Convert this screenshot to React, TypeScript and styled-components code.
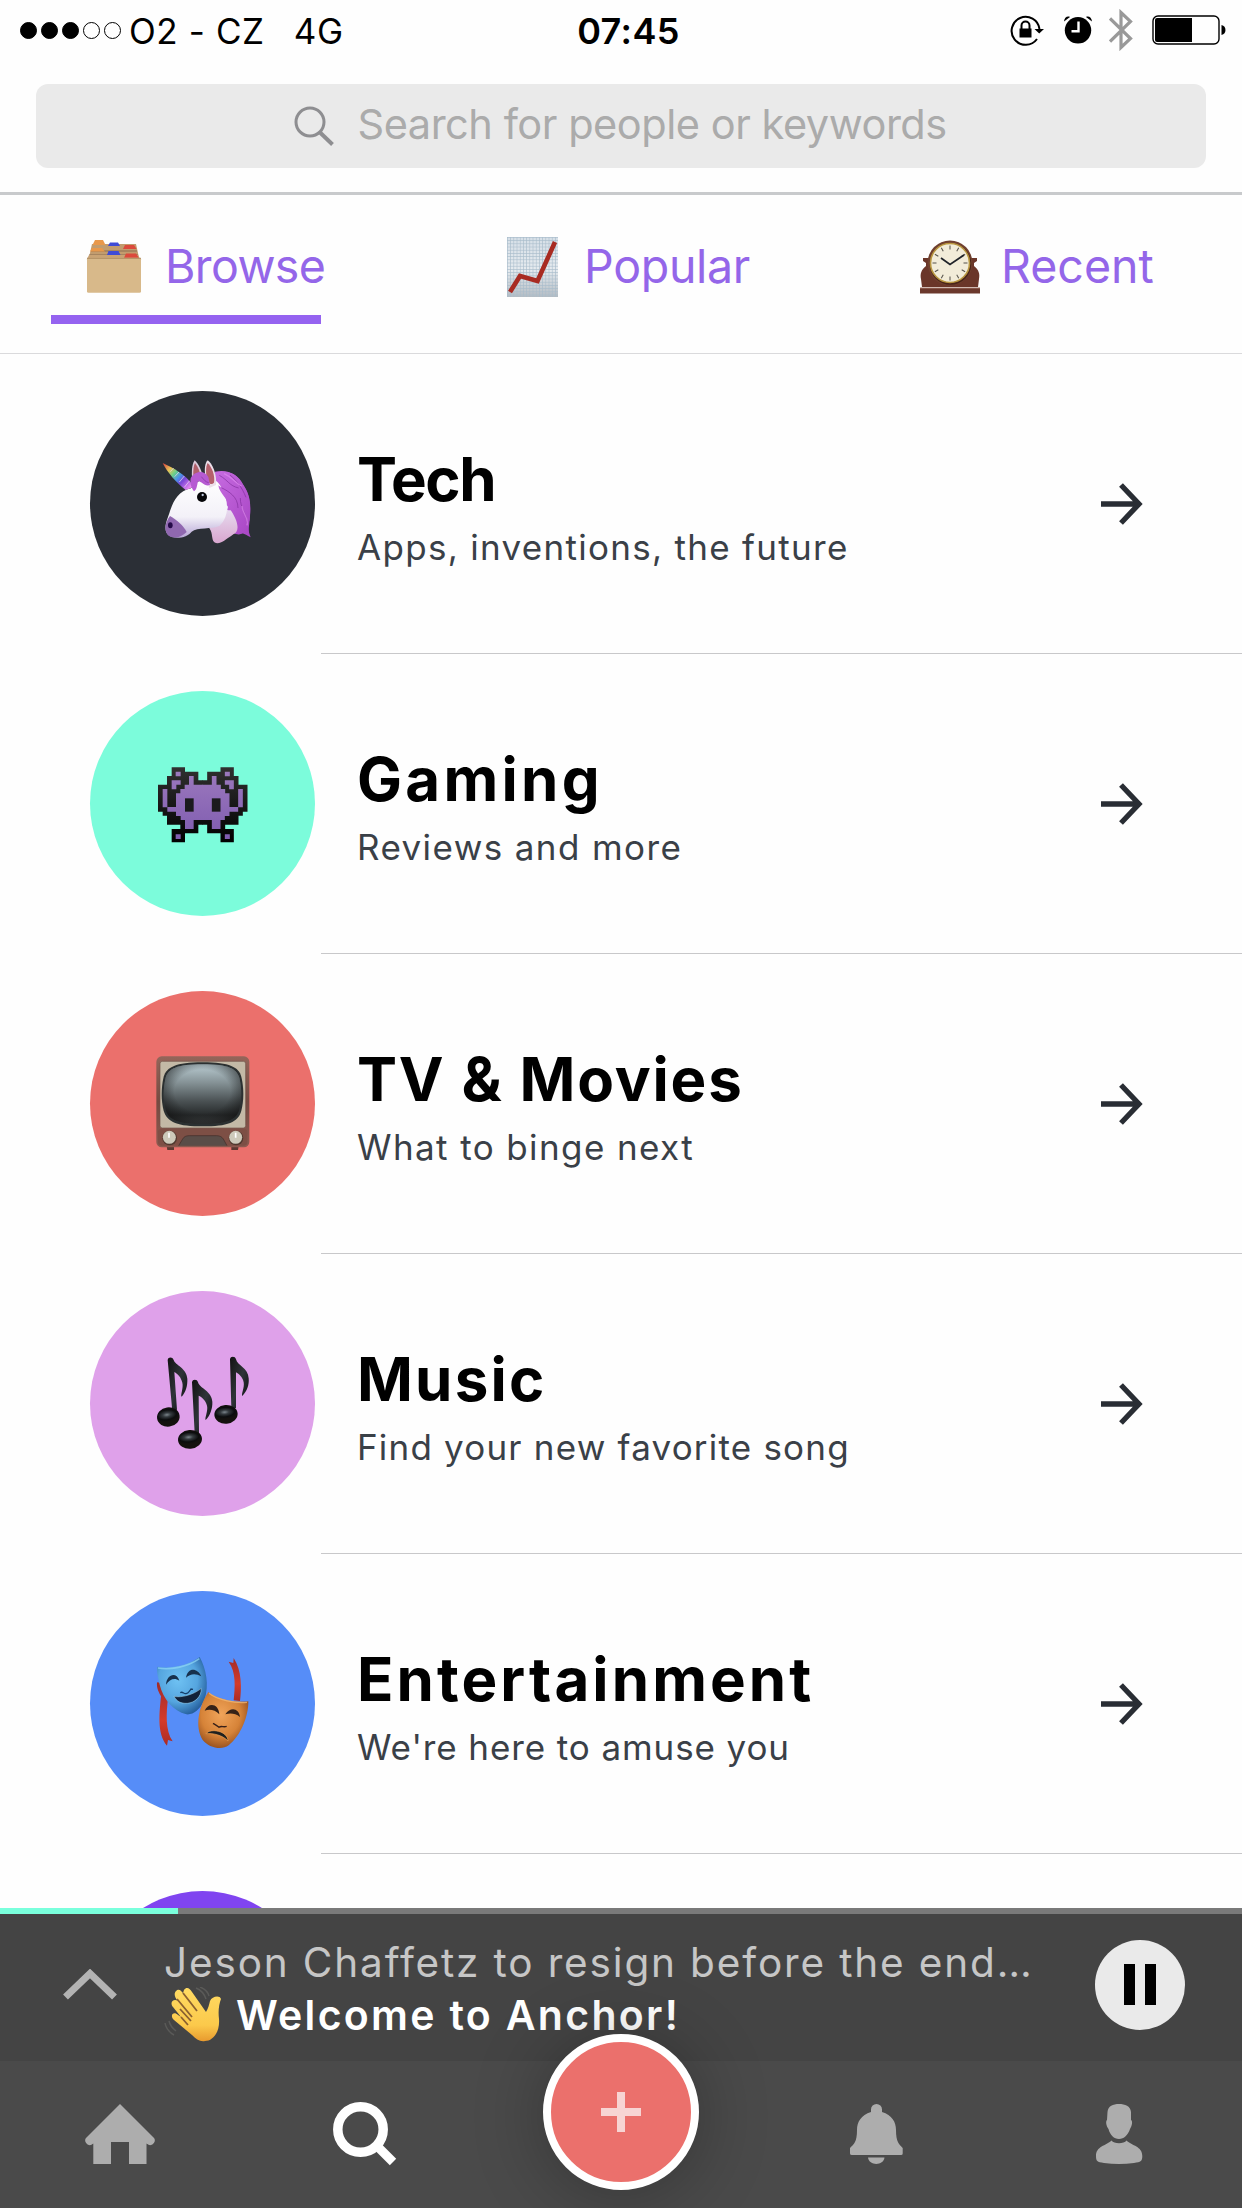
import React from "react";
import styled, { createGlobalStyle } from "styled-components";

const GlobalStyle = createGlobalStyle`
  *, *::before, *::after { box-sizing: border-box; }
  body { margin: 0; background: #fff; }
  svg { display: block; flex: none; }
`;

const Screen = styled.div`
  width: 1242px;
  height: 2208px;
  display: flex;
  flex-direction: column;
  overflow: hidden;
  background: #fefefe;
  font-family: Inter, "Liberation Sans", sans-serif;
`;

const StatusBar = styled.header`
  height: 60px;
  display: grid;
  grid-template-columns: 1fr auto 1fr;
  align-items: center;
  padding: 2px 16px 0 19px;
  font-size: 35px;
  line-height: 56px;
  color: #000;
`;

const Carrier = styled.div`
  display: flex;
  align-items: center;
  white-space: pre;
`;

const Signal = styled.div`
  display: flex;
  gap: 4px;
  margin: -1px 8px 0 1px;
`;

const Dot = styled.span<{ $on: boolean }>`
  width: 17px;
  height: 17px;
  border-radius: 50%;
  border: 1.5px solid #000;
  background: ${(p) => (p.$on ? "#000" : "transparent")};
`;

const CarrierText = styled.span<{ $track: number }>`
  letter-spacing: ${(p) => p.$track}px;
  margin-right: 29px;
`;

const Clock = styled.time`
  margin-left: 12px;
  font-size: 36px;
  font-weight: 600;
  letter-spacing: 0.4px;
`;

const StatusIcons = styled.div`
  display: flex;
  justify-content: flex-end;
  align-items: center;
  margin-top: -2px;
`;

const SearchArea = styled.div`
  height: 135px;
  padding: 24px 36px;
  border-bottom: 3px solid #c8cacc;
`;

const SearchBox = styled.div`
  height: 84px;
  border-radius: 12px;
  background: #eaeaea;
  display: flex;
  align-items: center;
  padding-left: 258px;
  gap: 22.5px;
`;

const Placeholder = styled.span`
  font-size: 41.5px;
  line-height: 80px;
  margin-top: -4px;
  letter-spacing: -0.46px;
  color: #ababab;
  white-space: nowrap;
`;

const Tabs = styled.nav`
  height: 159px;
  flex: none;
  display: flex;
  border-bottom: 1px solid #dadadc;
`;

const Tab = styled.div<{ $w: number; $pad: number; $gap: number }>`
  width: ${(p) => p.$w}px;
  padding-left: ${(p) => p.$pad}px;
  height: 142px;
  display: flex;
  align-items: center;
  gap: ${(p) => p.$gap}px;
`;

const TabGlyph = styled.span`
  margin-top: 2px;
`;

const TabLabel = styled.span<{ $track?: number }>`
  font-size: 46.5px;
  line-height: 60px;
  letter-spacing: ${(p) => p.$track ?? 0}px;
  color: #9466e9;
`;

const ActiveTab = styled.div`
  width: 420px;
  display: flex;
  flex-direction: column;
  padding-left: 51px;
`;

const Underline = styled.div`
  width: 270px;
  height: 9px;
  margin-top: -22px;
  background: #9563f0;
`;

const List = styled.main`
  flex: 1;
  min-height: 0;
  overflow: hidden;
`;

const Row = styled.section`
  height: 300px;
  display: flex;
  padding: 37px 0 0 90px;
`;

const Avatar = styled.div<{ $color: string }>`
  width: 225px;
  height: 225px;
  flex: none;
  border-radius: 50%;
  background: ${(p) => p.$color};
  display: flex;
  align-items: center;
  justify-content: center;
`;

const RowBody = styled.div`
  flex: 1;
  height: 263px;
  margin-left: 6px;
  padding: 0 98px 36px 36px;
  display: flex;
  align-items: center;
  justify-content: space-between;
  border-bottom: 1px solid #c8c8ca;
`;

const RowText = styled.div`
  padding-top: 6px;
`;

const Title = styled.h2<{ $track: number }>`
  margin: 0;
  font-size: 60px;
  font-weight: 700;
  line-height: 72px;
  letter-spacing: ${(p) => p.$track}px;
  color: #000;
  white-space: nowrap;
`;

const Subtitle = styled.p<{ $track: number }>`
  margin: 7px 0 0;
  font-size: 35px;
  line-height: 50px;
  letter-spacing: ${(p) => p.$track}px;
  color: #3a4047;
  white-space: nowrap;
`;

const Progress = styled.div`
  height: 6px;
  flex: none;
  background: #7a7a7a;
`;

const ProgressFill = styled.div`
  height: 6px;
  width: 178px;
  background: #7affdc;
`;

const Player = styled.div`
  height: 147px;
  flex: none;
  display: flex;
  align-items: flex-start;
  background: #444;
  padding: 0 57px 0 63px;
`;

const Expand = styled.div`
  padding-top: 55px;
  width: 101px;
`;

const Track = styled.div`
  flex: 1;
  padding-top: 24px;
`;

const Episode = styled.div`
  font-size: 40.5px;
  line-height: 50px;
  letter-spacing: 1.85px;
  color: #c6c6c6;
  white-space: nowrap;
`;

const Station = styled.div`
  display: flex;
  align-items: center;
  gap: 13px;
  font-size: 41px;
  font-weight: 600;
  line-height: 52px;
  height: 53px;
  letter-spacing: 2.3px;
  color: #fff;
  white-space: nowrap;
`;

const PauseButton = styled.div`
  width: 90px;
  height: 90px;
  margin-top: 26px;
  border-radius: 50%;
  background: #eaeaea;
  display: flex;
  align-items: center;
  justify-content: center;
  gap: 10px;
  padding: 0 0 1px 0;
`;

const PauseBar = styled.span`
  width: 11px;
  height: 41px;
  background: #000;
`;

const NavBar = styled.footer`
  position: relative;
  height: 147px;
  flex: none;
  display: flex;
  align-items: flex-start;
  background: #4a4a4a;
  padding: 43px 100px 0 85px;
`;

const NavItem = styled.div<{ $left?: number; $lift?: number }>`
  margin-left: ${(p) => p.$left ?? 0}px;
  margin-top: ${(p) => p.$lift ?? 0}px;
`;

const RecordButton = styled.div`
  position: absolute;
  left: 543px;
  top: -27px;
  width: 156px;
  height: 156px;
  border-radius: 50%;
  border: 8px solid #fff;
  background: #eb706c;
  box-shadow: 0 4px 70px rgba(0, 0, 0, 0.28);
  display: flex;
  align-items: center;
  justify-content: center;
`;

const LockIcon = () => (
  <svg width="34" height="32" viewBox="0 0 34 32">
    <path d="M27 25A14 14 0 1 1 29.5 15" fill="none" stroke="#000" strokeWidth="2" />
    <path d="M24.5 15h9.5l-4.8 4.5z" />
    <path d="M9.5 14.5h12v9h-12z" />
    <path d="M11.5 15v-3.500a4 4 0 0 1 8 0V15" fill="none" stroke="#000" strokeWidth="2" />
  </svg>
);

const AlarmIcon = () => (
  <svg width="28" height="28" viewBox="0 0 28 28">
    <circle cx="14" cy="14.300" r="13.200" />
    <path d="M0 5.500C.2 1.500 3.500-.5 6 1zM28 5.500C27.800 1.500 24.500-.5 22 1z" />
    <path d="M14.500 5.500V15.300H7.500" fill="none" stroke="#fff" strokeWidth="2.400" />
  </svg>
);

const BluetoothIcon = () => (
  <svg width="24" height="42" viewBox="0 0 24 42">
    <path d="M1 9.500L21.500 29.500L12 38.500V3.500L21.500 12.500L1 32.500" fill="none" stroke="#999" strokeWidth="3.200" />
  </svg>
);

const BatteryIcon = () => (
  <svg width="74" height="30" viewBox="0 0 74 30">
    <rect x="1" y="1" width="66" height="28" rx="5" fill="none" stroke="#000" strokeWidth="1.400" />
    <path d="M5 3h35v24H5a2 2 0 0 1-2-2V5a2 2 0 0 1 2-2z" />
    <path d="M69.500 10c5.300 1 5.300 9 0 10z" />
  </svg>
);

const MagnifierIcon = () => (
  <svg width="41" height="41" viewBox="0 0 41 41">
    <circle cx="16" cy="16" r="14" fill="none" stroke="#8e8e91" strokeWidth="3" />
    <path d="M25.500 26L38.500 38.500" stroke="#8e8e91" strokeWidth="4" />
  </svg>
);

const FolderEmoji = () => (
  <svg width="56" height="54" viewBox="0 0 56 54">
    <path d="M6 4h44l4 18H2z" fill="#c29c6e" />
    <path d="M7 4L9 0h8l2 4v1H7z" fill="#e9984a" />
    <path d="M22 6l2-3.500h8l2 3.500z" fill="#3e4bd6" />
    <path d="M37 9l2-4h9L50.500 9z" fill="#dc4a3c" />
    <path d="M5 11h46M3 15h49" stroke="#8c6f50" strokeWidth="1" />
    <path d="M4 11.500l2-3.500h10l3 3.500z" fill="#e9984a" />
    <path d="M3 15h49l2 4H1z" fill="#c9a374" />
    <path d="M38 18l2-4.500h10l3 4.500z" fill="#dc4a3c" />
    <path d="M21 15l1.500-4h10l2 4z" fill="#3e4bd6" />
    <rect x="1" y="17.800" width="54" height="35" rx="1.500" fill="#d8b98a" />
    <path d="M1 18.300h54" stroke="#b08d60" />
  </svg>
);

const ChartEmoji = () => (
  <svg width="51" height="60" viewBox="0 0 51 60">
    <defs>
      <linearGradient id="paper" x1="0" y1="0" x2="0" y2="1">
        <stop offset="0" stopColor="#d6dfe7" />
        <stop offset="0.550" stopColor="#e6ebef" />
        <stop offset="1" stopColor="#b4bcc3" />
      </linearGradient>
      <pattern id="grid" width="3.200" height="3.200" patternUnits="userSpaceOnUse">
        <path d="M0 .4H3.200M.4 0V3.200" stroke="#a8bccb" strokeWidth=".6" />
      </pattern>
    </defs>
    <rect width="51" height="60" fill="url(#paper)" />
    <rect width="51" height="60" fill="url(#grid)" />
    <path d="M3 55L13 39L30.500 44L48 5" fill="none" stroke="#a82b22" strokeWidth="4.600" />
  </svg>
);

const MantelClockEmoji = () => (
  <svg width="60" height="54" viewBox="0 0 60 54">
    <path d="M3 18h54v3l-3 2v3c5 4 6 8 5 13l-1 8H2L1 39c-1-5 0-9 5-13v-3l-3-2z" fill="#6a3629" />
    <circle cx="30" cy="23" r="22.500" fill="#70402f" />
    <path d="M0 48h60v5.500H0z" fill="#6b382c" />
    <path d="M0 48h60" stroke="#a37464" strokeWidth="1" />
    <circle cx="30.500" cy="24" r="20.800" fill="#4a241a" />
    <circle cx="30" cy="23" r="19.500" fill="#f2ecd9" stroke="#b8963f" strokeWidth="1.600" />
    <g stroke="#55514a" strokeWidth="1">
      {Array.from({ length: 12 }, (_, i) => (
        <path key={i} d="M30 5.500v4" transform={`rotate(${i * 30} 30 23)`} />
      ))}
    </g>
    <path d="M21 18l9 6.500L44 15" fill="none" stroke="#20242a" strokeWidth="1.800" />
  </svg>
);

const UnicornEmoji = () => (
  <svg width="129" height="129" viewBox="174 177 387 387">
    <defs>
      <linearGradient id="horn" x1="248" y1="250" x2="330" y2="325" gradientUnits="userSpaceOnUse">
        <stop offset="0" stopColor="#d63c3c" />
        <stop offset="0.250" stopColor="#e8c458" />
        <stop offset="0.420" stopColor="#68d08a" />
        <stop offset="0.580" stopColor="#4a90ea" />
        <stop offset="0.720" stopColor="#7a45d6" />
        <stop offset="1" stopColor="#f08cf5" />
      </linearGradient>
      <linearGradient id="face" x1="0" y1="0" x2="0" y2="1">
        <stop offset="0" stopColor="#fff" />
        <stop offset="0.650" stopColor="#f3f1f8" />
        <stop offset="1" stopColor="#b7a6d6" />
      </linearGradient>
      <linearGradient id="mane" x1="0" y1="0" x2="1" y2="1">
        <stop offset="0" stopColor="#c66be0" />
        <stop offset="1" stopColor="#a846c4" />
      </linearGradient>
      <linearGradient id="neck" x1="0" y1="0" x2="0" y2="1">
        <stop offset="0" stopColor="#e9e3f4" />
        <stop offset="1" stopColor="#d8a6cf" />
      </linearGradient>
    </defs>
    <path d="M405 275C445 266 475 285 488 313C508 340 514 375 509 420C500 438 506 455 512 472C501 466 494 462 488 460C478 466 468 462 460 460L400 350Z" fill="url(#mane)" />
    <path d="M440 375L388 445C400 462 393 477 403 487C418 495 432 483 460 463C485 452 470 410 440 375Z" fill="url(#neck)" />
    <path d="M336 292C334 266 338 249 344 241C356 252 366 272 368 292L345 305Z" fill="#dccbdc" />
    <path d="M340 290C339 270 341 256 345 249C355 262 360 276 362 288Z" fill="#b0606b" />
    <path d="M333 325C360 290 405 280 425 325C448 365 447 410 419 437C395 449 352 440 335 455C322 473 280 482 262 462C248 442 264 415 270 393C281 361 296 333 333 325Z" fill="url(#face)" />
    <path d="M270 408C290 420 310 436 320 456C304 473 280 478 264 466C250 449 257 426 270 408Z" fill="#9068b0" />
    <ellipse cx="271" cy="436" rx="7" ry="9" fill="#260b49" />
    <path d="M248 249C280 264 315 282 341 318C334 324 325 328 317 330C290 309 263 279 248 249Z" fill="url(#horn)" />
    <path d="M281 264L271 275M297 276L284 290M313 288L298 306M329 302L313 322" stroke="#f3d7f3" strokeWidth="3" opacity=".7" />
    <path d="M376 288C372 265 376 248 383 241C397 250 411 281 408 315L388 324Z" fill="#ecdfea" />
    <path d="M379 287C377 268 379 256 383 249C395 260 406 287 402 308C390 320 382 303 379 287Z" fill="#b5606c" />
    <path d="M332 295C344 272 373 269 385 291L390 315C372 321 364 302 354 304C351 317 350 330 342 334C332 322 330 307 332 295Z" fill="#b65bd2" />
    <path d="M408 278C425 312 438 324 469 332C450 335 430 331 415 316C418 344 454 360 442 389C454 397 464 380 468 374C470 402 490 411 492 435L478 462C496 459 503 456 508 468C503 448 509 433 509 414C514 371 510 344 489 313C476 286 447 268 408 278Z" fill="url(#mane)" />
    <path d="M418 286C445 301 447 317 476 324M424 323C446 334 474 350 474 384M450 285C470 302 485 320 498 352M481 354C480 384 502 402 501 431M364 290C372 299 376 306 386 308" fill="none" stroke="#85319f" strokeWidth="3" opacity=".7" />
    <path d="M432 281C462 294 466 310 485 318M486 378C488 402 507 412 501 436" fill="none" stroke="#de88ef" strokeWidth="4" opacity=".7" />
    <circle cx="366" cy="351" r="15" fill="#060609" />
    <circle cx="368" cy="345" r="3.500" fill="#c3cce0" />
  </svg>
);

const InvaderShell = () => (
  <path
    d="M95 82h40v13h40v26h14v133h-14v26h-40v27h-40v-40h26v-13h-40v-27h-13v-12h-14v-81h27v-26h14z"
    fill="url(#shell)"
  />
);

const InvaderSkin = () => (
  <g>
    <path
      d="M147 108h14v26h28v106h-28v27h-26v-27h-13v-12h-14v-13h-26v-14h26v-41h13v-13h13v-13h13z"
      fill="url(#skin)"
    />
    <path d="M107 95h15v14h-15zM95 121h27v13h-13v14h-14zM68 147h14v55h-14zM107 283h15v14h-15z" fill="url(#skin)" />
    <path d="M135 175h26v40h-26z" fill="#1b1a1d" />
  </g>
);

const InvaderEmoji = () => (
  <svg width="129" height="129" viewBox="-6 -3 387 387">
    <defs>
      <linearGradient id="shell" x1="0" y1="82" x2="0" y2="307" gradientUnits="userSpaceOnUse">
        <stop offset="0" stopColor="#303030" />
        <stop offset="1" stopColor="#000" />
      </linearGradient>
      <linearGradient id="skin" x1="0" y1="95" x2="0" y2="297" gradientUnits="userSpaceOnUse">
        <stop offset="0" stopColor="#9b78bd" />
        <stop offset="1" stopColor="#7f5cb0" />
      </linearGradient>
    </defs>
    <InvaderShell />
    <g transform="translate(376.500 0) scale(-1 1)">
      <InvaderShell />
    </g>
    <InvaderSkin />
    <g transform="translate(376.500 0) scale(-1 1)">
      <InvaderSkin />
    </g>
  </svg>
);

const TelevisionEmoji = () => (
  <svg width="129" height="129" viewBox="-6 -3 387 387">
    <defs>
      <linearGradient id="wood" x1="0" y1="0" x2="0" y2="1">
        <stop offset="0" stopColor="#94655a" />
        <stop offset="0.500" stopColor="#754a41" />
        <stop offset="1" stopColor="#8c5a50" />
      </linearGradient>
      <linearGradient id="glass" x1="0" y1="0" x2="0" y2="1">
        <stop offset="0" stopColor="#b9cbd1" />
        <stop offset="0.300" stopColor="#869397" />
        <stop offset="0.620" stopColor="#4a5153" />
        <stop offset="0.850" stopColor="#272a2b" />
        <stop offset="1" stopColor="#45494a" />
      </linearGradient>
      <radialGradient id="vignette" cx=".5" cy=".45" r=".6">
        <stop offset="0.600" stopColor="#111" stopOpacity="0" />
        <stop offset="1" stopColor="#111" stopOpacity=".65" />
      </radialGradient>
    </defs>
    <path d="M80 318h22v12h-20zM274 318h22l-2 12h-20z" fill="#5c3831" />
    <rect x="49" y="49" width="279" height="273" rx="16" fill="url(#wood)" />
    <rect x="60" y="64" width="257" height="200" rx="7" fill="#c3b9a6" stroke="#705348" strokeWidth="2" />
    <path d="M188 67C270 67 296 82 304 110C312 145 312 180 304 212C295 247 262 259 188 259C114 259 81 247 71 212C63 180 63 145 71 110C80 82 106 67 188 67Z" fill="#2b3031" />
    <path d="M188 73C268 73 289 87 298 113C306 146 305 180 298 209C288 242 256 252 188 252C120 252 86 242 77 209C69 180 69 146 77 113C86 87 108 73 188 73Z" fill="url(#glass)" />
    <path d="M188 73C268 73 289 87 298 113C306 146 305 180 298 209C288 242 256 252 188 252C120 252 86 242 77 209C69 180 69 146 77 113C86 87 108 73 188 73Z" fill="url(#vignette)" />
    <rect x="54" y="267" width="268" height="50" rx="10" fill="#7d4f45" />
    <path d="M116 317L128 297C132 290 138 287 148 287H230C240 287 246 291 250 297L261 317Z" fill="#5a4d48" />
    <path d="M116 317L128 297C132 290 138 287 148 287H230C240 287 246 291 250 297L261 317" fill="none" stroke="#402c28" strokeWidth="2" />
    <circle cx="89" cy="294" r="22" fill="#50382f" />
    <circle cx="288" cy="294" r="22" fill="#50382f" />
    <circle cx="88" cy="292" r="19.500" fill="#cdc9ba" />
    <circle cx="287" cy="292" r="19.500" fill="#cdc9ba" />
    <path d="M87 278v15M287 278v15" stroke="#fff" strokeWidth="5" />
  </svg>
);

const NotesEmoji = () => (
  <svg width="129" height="129" viewBox="-6 -3 387 387">
    <defs>
      <linearGradient id="ink" x1="0" y1="0" x2="1" y2="1">
        <stop offset="0" stopColor="#111" />
        <stop offset="0.500" stopColor="#2f3438" />
        <stop offset="1" stopColor="#08090a" />
      </linearGradient>
      <radialGradient id="ball" cx=".45" cy=".38" r=".6" gradientTransform="translate(0 .15) scale(1 .6)">
        <stop offset="0" stopColor="#7b858b" />
        <stop offset="0.300" stopColor="#343a3e" />
        <stop offset="0.700" stopColor="#0b0c0d" />
        <stop offset="1" stopColor="#14110e" />
      </radialGradient>
    </defs>
    <g transform="translate(52 54)">
      <path d="M31 6C32-4 46-4 49 6C54 22 88 30 90 62C91 83 85 103 73 116C68 113 79 90 75 74C71 57 61 48 51 42L59 155L45 160Z" fill="url(#ink)" />
      <ellipse cx="33" cy="177" rx="34" ry="29" transform="rotate(-8 33 177)" fill="url(#ball)" />
    </g>
    <g transform="translate(114 121)">
      <path d="M42 6C43-4 58-4 60 6C66 25 101 32 103 64C104 83 97 105 83 119C79 114 91 91 87 76C83 59 71 50 62 46L63 158L50 158Z" fill="url(#ink)" />
      <ellipse cx="36" cy="177" rx="36" ry="28" transform="rotate(-5 36 177)" fill="url(#ball)" />
    </g>
    <g transform="translate(224 52)">
      <path d="M46 6C47-4 62-4 64 6C68 25 101 32 102 63C104 82 97 102 83 116C79 111 90 91 87 75C84 59 73 50 64 45L64 152L50 152Z" fill="url(#ink)" />
      <ellipse cx="34" cy="171" rx="35" ry="28" transform="rotate(-5 34 171)" fill="url(#ball)" />
    </g>
  </svg>
);

const MasksEmoji = () => (
  <svg width="129" height="129" viewBox="-6 -3 387 387">
    <defs>
      <radialGradient id="joy" cx=".42" cy=".4" r=".65">
        <stop offset="0" stopColor="#6fc2f3" />
        <stop offset="0.600" stopColor="#55a5df" />
        <stop offset="1" stopColor="#245d9b" />
      </radialGradient>
      <radialGradient id="grief" cx=".45" cy=".4" r=".65">
        <stop offset="0" stopColor="#f0a45a" />
        <stop offset="0.600" stopColor="#d68338" />
        <stop offset="1" stopColor="#8d491c" />
      </radialGradient>
      <linearGradient id="ribbon" x1="0" y1="0" x2="0" y2="1">
        <stop offset="0" stopColor="#a22b2a" />
        <stop offset="0.600" stopColor="#d43b2a" />
        <stop offset="1" stopColor="#aa2b24" />
      </linearGradient>
    </defs>
    <path d="M51 128C61 121 75 155 84 174C79 219 75 271 98 304L84 300L81 317C49 280 59 213 63 169C58 159 49 145 51 128Z" fill="url(#ribbon)" />
    <path d="M266 65L280 69L281 54C306 92 305 145 300 183L281 181C285 142 289 97 266 65Z" fill="url(#ribbon)" />
    <path d="M52 80C88 87 140 79 179 51C198 86 209 134 193 181C178 211 160 225 139 223C99 212 70 178 59 134C55 111 49 98 52 80Z" fill="url(#joy)" />
    <path d="M54 84C89 91 143 81 178 56" fill="none" stroke="#91d5f7" strokeWidth="5" opacity=".7" />
    <path d="M78 134C80 103 109 94 118 122C104 112 89 117 78 134ZM138 113C144 81 172 84 184 109C167 99 150 101 138 113Z" fill="#17314d" />
    <path d="M102 169C124 174 161 164 184 145C184 172 164 188 142 190C122 191 110 184 102 169Z" fill="#122138" stroke="#a4dcf6" strokeWidth="1.500" />
    <path d="M121 158C127 153 132 162 137 161C145 161 149 153 153 147L159 148" fill="none" stroke="#163e69" strokeWidth="4" />
    <path d="M205 156C231 177 282 188 325 184C326 227 303 287 266 316C245 332 206 323 188 300C163 258 177 199 205 156Z" fill="url(#grief)" />
    <path d="M207 160C235 182 286 190 321 187" fill="none" stroke="#f4be7b" strokeWidth="4" opacity=".7" />
    <path d="M194 212C205 186 236 190 238 223C225 209 208 207 194 212ZM256 223C271 199 297 204 300 231C286 220 271 219 256 223Z" fill="#352218" />
    <path d="M198 281C211 263 264 273 264 303C247 285 219 279 198 281Z" fill="#1f211f" stroke="#ed9e50" strokeWidth="2" />
    <path d="M219 250C224 253 231 257 237 262C245 256 250 263 260 259" fill="none" stroke="#382018" strokeWidth="4" />
  </svg>
);

const WaveEmoji = () => (
  <svg width="59" height="56" viewBox="0 0 59 56">
    <defs>
      <linearGradient id="hand" x1="0" y1="0" x2="0" y2="1">
        <stop offset="0" stopColor="#ffdb63" />
        <stop offset="0.700" stopColor="#fbc94b" />
        <stop offset="1" stopColor="#e89a2e" />
      </linearGradient>
    </defs>
    <path d="M32 1c5 2 8 5 10 11M36 0c5 2 8 5 9 9M1 36c1 6 4 9 9 12M5 34c1 4 3 7 7 10" fill="none" stroke="#5a5a58" strokeWidth="1.500" />
    <path
      d="M12 4c3-3 5 0 7 2l1-3c3-4 6-1 8 2l14 20c2-3 3-7 4-11 2-5 10-6 11-2-2 5-3 12-2 20 1 13-6 22-14 22-5 1-9-2-13-6L10 33c-5-5 0-9 4-5l3 2-8-10c-4-5 1-9 5-6-4-4-4-8-2-10z"
      fill="url(#hand)"
    />
    <path d="M19 6l14 18M13 12l15 18M16 22l11 12M17 30l7 8" fill="none" stroke="#8a6030" strokeWidth="1.800" />
  </svg>
);

const ArrowIcon = () => (
  <svg width="46" height="44" viewBox="0 0 46 44">
    <path d="M3 22H41M23 3L41 22L23 41" fill="none" stroke="#292d34" strokeWidth="5.300" />
  </svg>
);

const ChevronIcon = () => (
  <svg width="54" height="32" viewBox="0 0 54 32">
    <path d="M2.500 28L27 4.500L51.500 28" fill="none" stroke="#b3b3b3" strokeWidth="7" />
  </svg>
);

const HomeIcon = () => (
  <svg width="70" height="60" viewBox="0 0 70 60" fill="#adadad">
    <path d="M35 0L69 34c2.500 3-1 8-5 7l-2.500-1.500V60H44V38H26v22H8.300V39.500L6 41C2 42-1.500 37 1 34z" />
  </svg>
);

const NavSearchIcon = () => (
  <svg width="66" height="66" viewBox="0 0 66 66" fill="none" stroke="#fff">
    <circle cx="27.500" cy="27.500" r="22.700" strokeWidth="9.500" />
    <path d="M42.500 42.500L60 60" strokeWidth="9" />
  </svg>
);

const BellIcon = () => (
  <svg width="53" height="60" viewBox="0 0 53 60" fill="#adadad">
    <path d="M21 8V5.500a5.500 5.500 0 0 1 11 0V8C42 11 46 18 46 26C46 38 49 40 52.700 44V49.500Q52.700 51 51 51H2Q0 51 0 49.500V44C4 40 7 38 7 26C7 18 11 11 21 8Z" />
    <path d="M18 53.500h16.500c-1 8.600-15.500 8.600-16.500 0z" />
  </svg>
);

const PersonIcon = () => (
  <svg width="47" height="60" viewBox="0 0 47 60" fill="#adadad">
    <path d="M11.500 8C12 2 17 0 23 0C29 0 34.500 2 35 8V16C37 17 36 22 34 25C32 31 28 35 23 35C18 35 14 31 12.500 25C10 22 9.500 17 11 16Z" />
    <path d="M15.500 36.500C10 42 0 42 0 52C0 57 1 58 8 59C18 60.300 28 60.300 38 59C45 58 46.300 57 46.300 52C46.300 42 36 42 30.500 36.500C28 40 18 40 15.500 36.500Z" />
  </svg>
);

const PlusIcon = () => (
  <svg width="40" height="40" viewBox="0 0 40 40">
    <path d="M20 0V40M0 20H40" stroke="#f7d4d3" strokeWidth="8" />
  </svg>
);

const categories = [
  { title: "Tech", track: -1.4, sub: "Apps, inventions, the future", subTrack: 1.3, color: "#2b2f36", icon: <UnicornEmoji /> },
  { title: "Gaming", track: 3.3, sub: "Reviews and more", subTrack: 1.4, color: "#7cfcdb", icon: <InvaderEmoji /> },
  { title: "TV & Movies", track: 1.8, sub: "What to binge next", subTrack: 1.4, color: "#eb706c", icon: <TelevisionEmoji /> },
  { title: "Music", track: 2.2, sub: "Find your new favorite song", subTrack: 1.2, color: "#dfa1ea", icon: <NotesEmoji /> },
  { title: "Entertainment", track: 3.1, sub: "We're here to amuse you", subTrack: 0.9, color: "#568df8", icon: <MasksEmoji /> },
];

export default function App() {
  return (
    <Screen>
      <GlobalStyle />
      <StatusBar>
        <Carrier>
          <Signal>
            {[true, true, true, false, false].map((on, i) => (
              <Dot key={i} $on={on} />
            ))}
          </Signal>
          <CarrierText $track={0.6}>O2 - CZ</CarrierText>
          <CarrierText $track={0.6}>4G</CarrierText>
        </Carrier>
        <Clock>07:45</Clock>
        <StatusIcons>
          <NavItem><LockIcon /></NavItem>
          <NavItem $left={20}><AlarmIcon /></NavItem>
          <NavItem $left={17}><BluetoothIcon /></NavItem>
          <NavItem $left={19}><BatteryIcon /></NavItem>
        </StatusIcons>
      </StatusBar>
      <SearchArea>
        <SearchBox>
          <MagnifierIcon />
          <Placeholder>Search for people or keywords</Placeholder>
        </SearchBox>
      </SearchArea>
      <Tabs>
        <ActiveTab>
          <Tab $w={369} $pad={35} $gap={23}>
            <TabGlyph><FolderEmoji /></TabGlyph>
            <TabLabel $track={-0.6}>Browse</TabLabel>
          </Tab>
          <Underline />
        </ActiveTab>
        <Tab $w={420} $pad={87} $gap={26}>
          <TabGlyph><ChartEmoji /></TabGlyph>
          <TabLabel $track={-0.3}>Popular</TabLabel>
        </Tab>
        <Tab $w={402} $pad={80} $gap={21}>
          <TabGlyph><MantelClockEmoji /></TabGlyph>
          <TabLabel>Recent</TabLabel>
        </Tab>
      </Tabs>
      <List>
        {categories.map((c) => (
          <Row key={c.title}>
            <Avatar $color={c.color}>{c.icon}</Avatar>
            <RowBody>
              <RowText>
                <Title $track={c.track}>{c.title}</Title>
                <Subtitle $track={c.subTrack}>{c.sub}</Subtitle>
              </RowText>
              <ArrowIcon />
            </RowBody>
          </Row>
        ))}
        <Row>
          <Avatar $color="#8044f0" />
        </Row>
      </List>
      <Progress>
        <ProgressFill />
      </Progress>
      <Player>
        <Expand>
          <ChevronIcon />
        </Expand>
        <Track>
          <Episode>Jeson Chaffetz to resign before the end…</Episode>
          <Station>
            <WaveEmoji />
            Welcome to Anchor!
          </Station>
        </Track>
        <PauseButton>
          <PauseBar />
          <PauseBar />
        </PauseButton>
      </Player>
      <NavBar>
        <NavItem><HomeIcon /></NavItem>
        <NavItem $left={177.5} $lift={-2}><NavSearchIcon /></NavItem>
        <NavItem $left={451.5}><BellIcon /></NavItem>
        <NavItem $left={193}><PersonIcon /></NavItem>
        <RecordButton>
          <PlusIcon />
        </RecordButton>
      </NavBar>
    </Screen>
  );
}
